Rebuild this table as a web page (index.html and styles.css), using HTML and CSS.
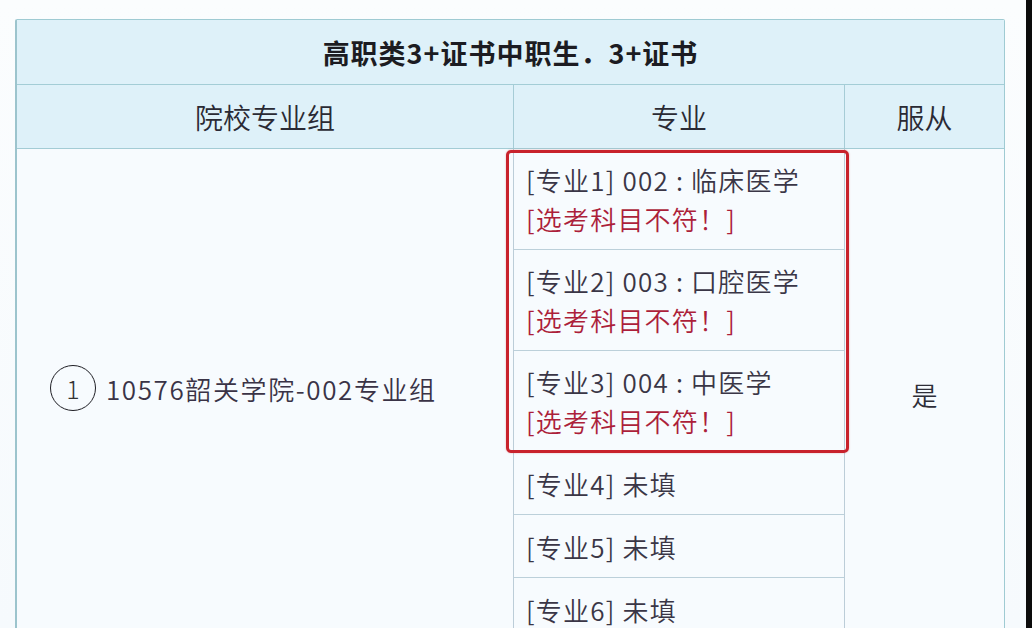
FILE: index.html
```html
<!DOCTYPE html>
<html lang="zh-CN">
<head>
<meta charset="utf-8">
<title>志愿表</title>
<link rel="stylesheet" href="styles.css">
</head>
<body>
<div class="screen">
  <div class="page">
    <div class="sheet">
      <div class="title">高职类3+证书中职生．3+证书</div>
      <div class="head">
        <div class="h c1">院校专业组</div>
        <div class="h c2">专业</div>
        <div class="h c3">服从</div>
      </div>
      <div class="body">
        <div class="group-cell">
          <span class="num">1</span>
          <span class="group-name">10576韶关学院-002专业组</span>
        </div>
        <div class="majors">
          <div class="flagged">
            <div class="major two">
              <div>[专业1] 002 : 临床医学</div>
              <div class="warn">[选考科目不符！]</div>
            </div>
            <div class="major two">
              <div>[专业2] 003 : 口腔医学</div>
              <div class="warn">[选考科目不符！]</div>
            </div>
            <div class="major two">
              <div>[专业3] 004 : 中医学</div>
              <div class="warn">[选考科目不符！]</div>
            </div>
          </div>
          <div class="major one">[专业4] 未填</div>
          <div class="major one">[专业5] 未填</div>
          <div class="major one">[专业6] 未填</div>
        </div>
        <div class="obey">是</div>
      </div>
    </div>
  </div>
  <div class="edge"></div>
</div>
</body>
</html>
```
FILE: styles.css
```css
html, body {
  margin: 0;
  padding: 0;
  height: 100%;
  overflow: hidden;
}
body {
  background: #f7fbfd;
  font-family: "Noto Sans CJK SC", "Noto Sans", sans-serif;
  color: #3a3646;
}
.screen {
  display: flex;
  height: 628px;
  overflow: hidden;
}
.page {
  flex: 1;
  padding: 19px 21px 0 15px;
  background: linear-gradient(#fbfdfe, #f6fafd);
}
.edge {
  width: 6px;
  background: #0c0c0c;
}
.sheet {
  border: 1px solid #9fcbd3;
  border-left: 2px solid #9cc4cd;
  border-radius: 2px 2px 0 0;
  background: #f7fbfe;
}
.title {
  height: 64px;
  display: flex;
  align-items: center;
  justify-content: center;
  background: #def1f9;
  border-bottom: 1px solid #a3cdd6;
  font-size: 27px;
  font-weight: 700;
  letter-spacing: 1px;
  color: #1c1c22;
}
.head {
  display: grid;
  grid-template-columns: 497px 331px 1fr;
  background: #def1f9;
  border-bottom: 1px solid #a3ccd5;
}
.h {
  height: 63px;
  display: flex;
  align-items: center;
  justify-content: center;
  font-size: 28px;
  font-weight: 350;
  color: #2a2a34;
}
.c1, .c2 {
  border-right: 1px solid #a6ccd6;
}
.body {
  display: grid;
  grid-template-columns: 497px 331px 1fr;
}
.group-cell {
  display: flex;
  align-items: center;
  gap: 10px;
  padding-left: 33px;
  padding-bottom: 14px;
  border-right: 1px solid #bccdd8;
  font-size: 26px;
  font-weight: 350;
}
.num {
  width: 46px;
  height: 46px;
  box-sizing: border-box;
  border: 1.8px solid #1e1e24;
  border-radius: 50%;
  display: flex;
  align-items: center;
  justify-content: center;
  font-size: 25px;
  font-weight: 300;
  color: #333;
}
.group-name {
  letter-spacing: 1.6px;
  color: #3a3346;
}
.majors {
  border-right: 1px solid #bccdd8;
  display: flex;
  flex-direction: column;
}
.flagged {
  position: relative;
}
.flagged::after {
  content: "";
  position: absolute;
  left: -8px;
  right: -5px;
  top: 1px;
  bottom: -1px;
  border: 3.5px solid #c8222c;
  border-radius: 5px;
  box-shadow: 0 0 2px rgba(200, 34, 44, 0.35);
  pointer-events: none;
}
.major {
  padding: 11px 12px;
  line-height: 39px;
  font-size: 26px;
  font-weight: 350;
  letter-spacing: 1.2px;
  border-bottom: 1px solid #bcd0da;
  color: #3a3646;
  white-space: nowrap;
}
.major.one {
  padding: 12px 12px 11px;
}
.warn {
  color: #ac1f3a;
}
.obey {
  display: flex;
  align-items: center;
  justify-content: center;
  font-size: 26px;
  font-weight: 350;
  color: #2e2e38;
  padding-bottom: 2px;
}
```
